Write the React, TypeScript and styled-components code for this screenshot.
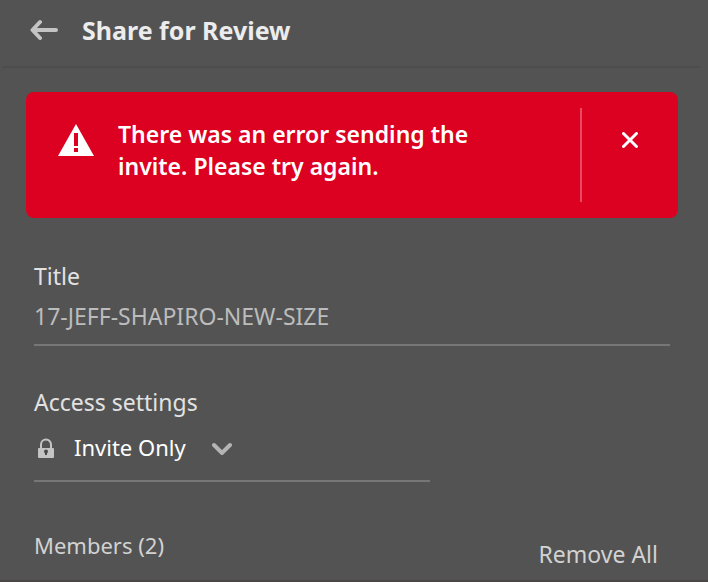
import React, { useState } from "react";
import styled, { createGlobalStyle } from "styled-components";

const GlobalStyle = createGlobalStyle`
  * { box-sizing: border-box; }
  body {
    margin: 0;
    background: #535353;
    color: #dedede;
    font-family: "Noto Sans", "Open Sans", sans-serif;
    font-size: 23px;
    line-height: 32px;
  }
  button, input, select { font: inherit; color: inherit; }
`;

const Panel = styled.main`
  display: flex;
  flex-direction: column;
`;

const Header = styled.header`
  display: flex;
  align-items: center;
  gap: 22px;
  height: 68px;
  margin: 0 8px 0 2px;
  padding: 0 28px 6px;
  border-bottom: 2px solid #4d4d4d;
`;

const IconButton = styled.button`
  display: flex;
  padding: 0;
  border: 0;
  background: none;
  cursor: pointer;
`;

const Heading = styled.h1`
  margin: 0;
  color: #ececec;
  font-size: 25px;
  font-weight: 700;
  line-height: 30px;
`;

const Alert = styled.section`
  display: flex;
  align-items: stretch;
  gap: 24px;
  margin: 24px 30px 0 26px;
  padding: 16px 0 16px 32px;
  min-height: 126px;
  border-radius: 8px;
  background: #dc0021;
  color: #fff;
`;

const AlertIcon = styled.span`
  padding-top: 16px;
  line-height: 0;
`;

const AlertText = styled.p`
  flex: 1;
  max-width: 400px;
  margin: 0;
  padding-top: 10px;
  font-weight: 600;
`;

const AlertAction = styled.div`
  display: flex;
  justify-content: center;
  align-items: flex-start;
  width: 98px;
  margin-left: auto;
  padding-top: 24px;
  border-left: 2px solid #ea4a61;
`;

const Form = styled.form`
  display: flex;
  flex-direction: column;
  padding: 42px 38px 0 34px;
`;

const Label = styled.label`
  color: #e2e2e2;
`;

const TitleInput = styled.input`
  width: 100%;
  height: 54px;
  margin-bottom: 40px;
  padding: 0 0 4px;
  border: 0;
  border-bottom: 2px solid #777;
  outline: 0;
  background: none;
  color: #bcbcbc;
`;

const AccessField = styled.div`
  display: flex;
  align-items: center;
  width: 396px;
  max-width: 100%;
  height: 64px;
  margin-bottom: 47px;
  padding: 0 0 4px 4px;
  border-bottom: 2px solid #777;
`;

const SelectBox = styled.div`
  display: grid;
  align-items: center;
  margin-left: 20px;

  > * { grid-area: 1 / 1; }
  > svg { justify-self: end; pointer-events: none; }
`;

const Select = styled.select`
  appearance: none;
  field-sizing: content;
  padding: 0 46px 0 0;
  border: 0;
  outline: 0;
  background: none;
  color: #fff;
  font-size: 22px;
  cursor: pointer;

  option { background: #535353; }
`;

const MembersBar = styled.div`
  display: flex;
  justify-content: space-between;
  padding: 0 50px 0 34px;
  height: 53px;
  border-bottom: 2px solid #4b4747;
`;

const MembersHeading = styled.h2`
  margin: 0;
  color: #d2d2d2;
  font-size: 22px;
  font-weight: 400;
`;

const TextButton = styled.button`
  align-self: flex-start;
  margin-top: 9px;
  padding: 0;
  border: 0;
  background: none;
  color: #d2d2d2;
  line-height: 32px;
  cursor: pointer;
`;

const BackIcon = () => (
  <svg width="30" height="24" viewBox="0 0 30 24" fill="none" stroke="#c4c4c4" strokeWidth="4" strokeLinecap="round" strokeLinejoin="round" aria-hidden="true">
    <path d="M10 4 2.5 12l7.5 8M3 12h23" />
  </svg>
);

const WarningIcon = () => (
  <svg width="36" height="32" viewBox="0 0 36 32" aria-hidden="true">
    <path fill="#fff" d="M18 0 36 32H0z" />
    <path fill="#dc0021" d="M16 9h4v13h-4zM16 24h4v4h-4z" />
  </svg>
);

const CloseIcon = () => (
  <svg width="16" height="16" viewBox="0 0 16 16" fill="none" stroke="#fff" strokeWidth="3" strokeLinecap="round" aria-hidden="true">
    <path d="m1.5 1.5 13 13M14.5 1.5l-13 13" />
  </svg>
);

const LockIcon = () => (
  <svg width="16" height="22" viewBox="0 -2 16 22" aria-hidden="true">
    <path d="M3 11V6.500a5 5 0 0 1 10 0V11" fill="none" stroke="#c4c4c4" strokeWidth="2" />
    <rect y="10" width="16" height="10" rx="1" fill="#c4c4c4" />
    <circle cx="8" cy="13.500" r="2" fill="#484848" />
    <path d="M7 13h2v4H7z" fill="#484848" />
  </svg>
);

const ChevronIcon = () => (
  <svg width="20" height="16" viewBox="0 0 20 16" fill="none" stroke="#b4b4b4" strokeWidth="4" strokeLinecap="round" aria-hidden="true">
    <path d="m2 6 8 8 8-8" />
  </svg>
);

export default function App() {
  const [showError, setShowError] = useState(true);
  const [title, setTitle] = useState("17-JEFF-SHAPIRO-NEW-SIZE");

  return (
    <>
      <GlobalStyle />
      <Panel>
        <Header>
          <IconButton type="button" aria-label="Back"><BackIcon /></IconButton>
          <Heading>Share for Review</Heading>
        </Header>
        {showError && (
          <Alert role="alert">
            <AlertIcon><WarningIcon /></AlertIcon>
            <AlertText>There was an error sending the invite. Please try again.</AlertText>
            <AlertAction>
              <IconButton type="button" aria-label="Dismiss" onClick={() => setShowError(false)}>
                <CloseIcon />
              </IconButton>
            </AlertAction>
          </Alert>
        )}
        <Form>
          <Label htmlFor="title">Title</Label>
          <TitleInput id="title" value={title} onChange={(e) => setTitle(e.target.value)} />
          <Label htmlFor="access">Access settings</Label>
          <AccessField>
            <LockIcon />
            <SelectBox>
              <Select id="access">
                <option>Invite Only</option>
              </Select>
              <ChevronIcon />
            </SelectBox>
          </AccessField>
        </Form>
        <MembersBar>
          <MembersHeading>Members (2)</MembersHeading>
          <TextButton type="button">Remove All</TextButton>
        </MembersBar>
      </Panel>
    </>
  );
}
